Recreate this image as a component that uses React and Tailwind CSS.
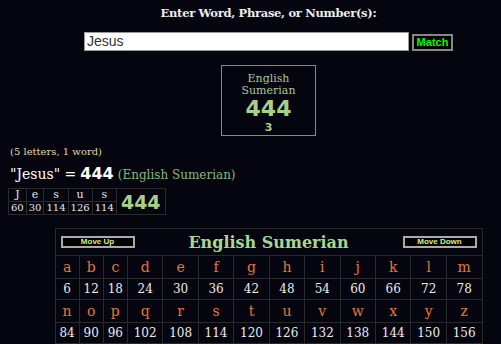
import React from "react";

const row1 = [
  ["a", 6], ["b", 12], ["c", 18], ["d", 24], ["e", 30], ["f", 36], ["g", 42],
  ["h", 48], ["i", 54], ["j", 60], ["k", 66], ["l", 72], ["m", 78],
];
const row2 = [
  ["n", 84], ["o", 90], ["p", 96], ["q", 102], ["r", 108], ["s", 114], ["t", 120],
  ["u", 126], ["v", 132], ["w", 138], ["x", 144], ["y", 150], ["z", 156],
];
const word = [["J", 60], ["e", 30], ["s", 114], ["u", 126], ["s", 114]];

export default function App() {
  return (
    <div className="w-[501px] h-[344px] overflow-hidden bg-[#05050f] font-['DejaVu_Serif',serif] text-[#e8e8e8]">
      <div className="pl-[36px] flex flex-col items-center pt-[5px]">
        <div className="font-bold text-[11.5px] leading-[16px] text-[#ececec] tracking-[-0.3px]">
          Enter Word, Phrase, or Number(s):
        </div>
        <div className="flex items-center mt-[11px] gap-[3px]">
          <div className="w-[325px] h-[19px] bg-white border border-[#999] flex items-center pl-[2px] font-['Liberation_Sans',sans-serif] text-[14px] text-[#333]">
            Jesus
          </div>
          <div className="w-[41px] h-[17px] mt-[2px] bg-black border-2 border-[#888] flex items-center justify-center font-['Liberation_Sans',sans-serif] font-bold text-[11px] text-[#00ff00]">
            Match
          </div>
        </div>
        <div className="mt-[14px] w-[95px] h-[71px] border border-[#8a8a8a] flex flex-col items-center pt-[7px]">
          <div className="font-['DejaVu_Serif',serif] text-[11px] leading-[12px] text-[#a8c898] text-center">English<br />Sumerian</div>
          <div className="font-['DejaVu_Sans',sans-serif] font-bold text-[22px] leading-[24px] text-[#a8d088]">444</div>
          <div className="font-['DejaVu_Sans',sans-serif] font-bold text-[11px] leading-[14px] text-[#a8d088]">3</div>
        </div>
      </div>
      <div className="pl-[10px] mt-[9px] text-[10px] leading-[13px] text-[#e0d8a8]">(5 letters, 1 word)</div>
      <div className="pl-[10px] mt-[6px] flex items-baseline leading-[20px]">
        <span className="font-['DejaVu_Serif',serif] text-[14px] text-white">"Jesus" =</span>
        <span className="font-['DejaVu_Sans',sans-serif] font-bold text-[16px] text-white ml-[4px]">444</span>
        <span className="font-['DejaVu_Serif',serif] text-[12px] text-[#88b878] ml-[4px]">(English Sumerian)</span>
      </div>
      <div className="pl-[8px] mt-[3px]">
        <table className="border-collapse text-[10px] leading-[12px]">
          <tbody>
            <tr>
              {word.map(([l], i) => (
                <td key={i} className="border border-[#2a2a2a] px-[2px] text-center text-[11px] text-[#e8e8e8] h-[13px]">{l}</td>
              ))}
              <td rowSpan={2} className="border border-[#2a2a2a] w-[49px] text-center font-['DejaVu_Sans',sans-serif] font-bold text-[19px] text-[#a8d088]">444</td>
            </tr>
            <tr>
              {word.map(([, v], i) => (
                <td key={i} className="border border-[#2a2a2a] px-[2px] text-center text-[#e8e8e8] h-[13px]">{v}</td>
              ))}
            </tr>
          </tbody>
        </table>
      </div>
      <div className="pl-[36px] flex justify-center mt-[13px]">
        <table className="border-collapse w-[428px]">
          <tbody>
            <tr>
              <td colSpan={13} className="border border-[#2a2a2a] h-[25px] px-[5px]">
                <div className="flex items-center justify-between">
                  <div className="w-[74px] h-[12px] bg-black border-2 border-[#aaa] flex items-center justify-center font-['Liberation_Sans',sans-serif] font-bold text-[8px] text-[#d8f080]">Move Up</div>
                  <div className="font-bold text-[16px] text-[#a8d88c] pt-[2px]">English Sumerian</div>
                  <div className="w-[74px] h-[12px] bg-black border-2 border-[#aaa] flex items-center justify-center font-['Liberation_Sans',sans-serif] font-bold text-[8px] text-[#d8f080]">Move Down</div>
                </div>
              </td>
            </tr>
            {[row1, row2].map((row, r) => (
              <React.Fragment key={r}>
                <tr>
                  {row.map(([l]) => (
                    <td key={l} className="border border-[#2a2a2a] h-[23px] text-center text-[14px] text-[#e07838]">{l}</td>
                  ))}
                </tr>
                <tr>
                  {row.map(([l, v]) => (
                    <td key={l} className="border border-[#2a2a2a] h-[21px] text-center text-[12px] text-[#ececec]">{v}</td>
                  ))}
                </tr>
              </React.Fragment>
            ))}
          </tbody>
        </table>
      </div>
    </div>
  );
}
